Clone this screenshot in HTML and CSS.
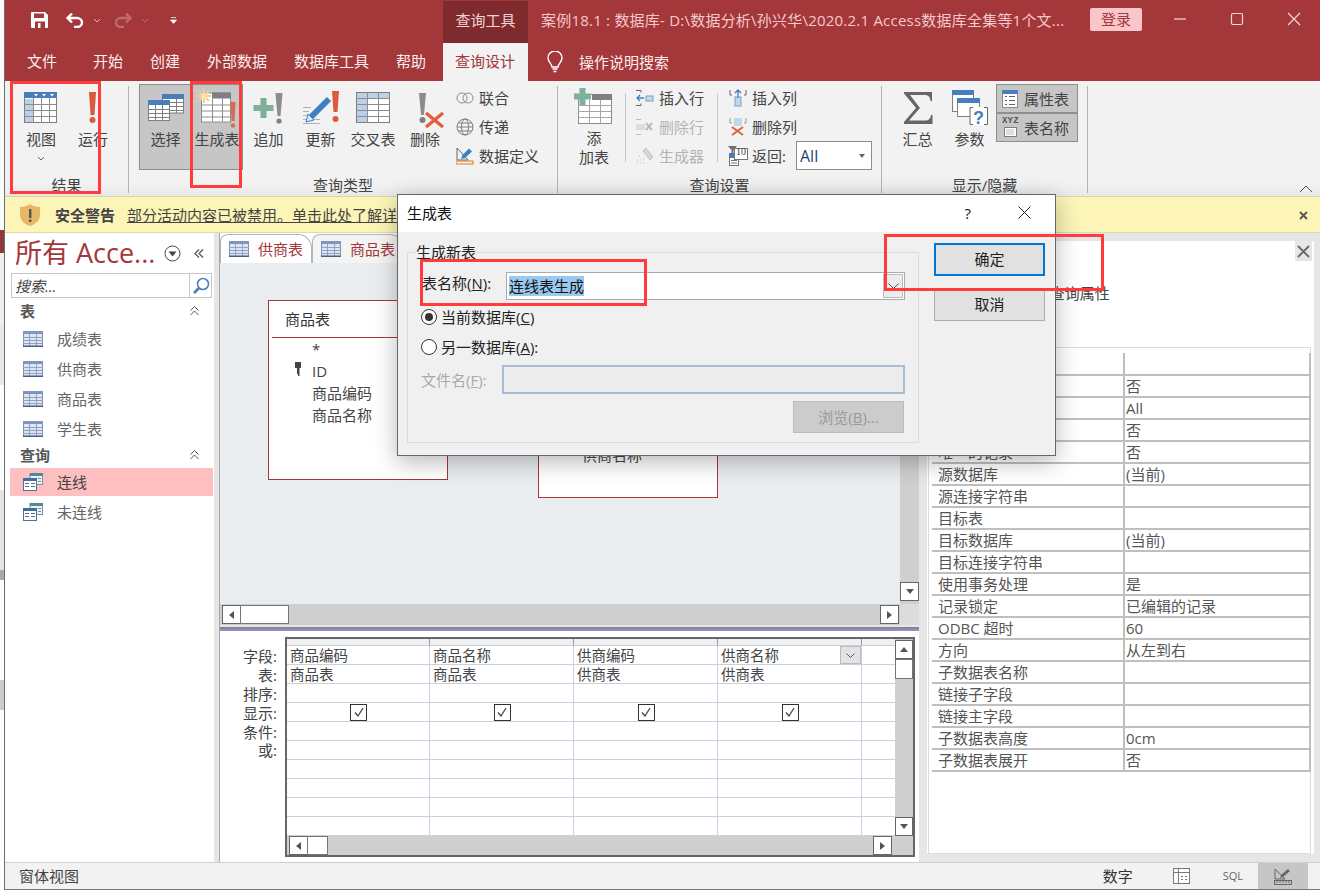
FILE: index.html
```html
<!DOCTYPE html>
<html lang="zh-CN">
<head>
<meta charset="utf-8">
<title>生成表</title>
<link rel="stylesheet" href="styles.css">
</head>
<body>
<svg class="defs" width="0" height="0">
  <symbol id="navtbl" viewBox="0 0 20 16">
    <rect x="0.5" y="0.5" width="19" height="15" fill="#dfe6f2" stroke="#7d8fb0"/>
    <rect x="0" y="0" width="20" height="3" fill="#7f95bd"/>
    <path d="M0 6.5h20M0 9.5h20M0 12.5h20M6.5 3v12M13.5 3v12" stroke="#8ea2c4" fill="none"/>
    <rect x="0" y="14.5" width="20" height="1.5" fill="#4a5f80"/>
  </symbol>
  <symbol id="navqry" viewBox="0 0 20 18">
    <rect x="7" y="0.5" width="12.5" height="11" fill="#eef3f6" stroke="#6f97a3"/>
    <rect x="7" y="0" width="13" height="3" fill="#4f8a96"/>
    <rect x="0.5" y="5.5" width="13" height="12" fill="#fff" stroke="#56708f"/>
    <rect x="0" y="5" width="14" height="3" fill="#3f6f96"/>
    <path d="M2 10.5h4M2 13.5h4M8 10.5h4M8 13.5h4" stroke="#56708f" fill="none"/>
    <path d="M15 5.5h3M15 8.5h3" stroke="#6f97a3"/>
  </symbol>
</svg>
<div class="screen">
  <div class="strip"><i class="b1"></i><i class="b2"></i><i class="b3"></i><i class="b4"></i><i class="b5"></i><i class="b6"></i><i class="b7"></i><i class="b8"></i><i class="b9"></i><i class="b10"></i></div>
  <div class="app">
    <header class="titlebar">
      <div class="qat">
        <svg class="q-save" width="18" height="16" viewBox="0 0 18 16"><path fill="#fff" d="M1 0h13l3 3v12a1 1 0 0 1-1 1H1a1 1 0 0 1-1-1V1a1 1 0 0 1 1-1zm2 1.5V6h10V1.500zM4 9.500V16h10V9.500z" fill-rule="evenodd"/><rect x="7" y="11" width="2.500" height="5" fill="#fff"/></svg>
        <svg class="q-undo" width="18" height="16" viewBox="0 0 18 16"><path d="M6 1.500 1.500 6 6 10.500M2 6h9a5 4.500 0 0 1 0 9H8" fill="none" stroke="#fff" stroke-width="2.400"/></svg>
        <svg class="q-chev" width="8" height="5" viewBox="0 0 8 5"><path d="M1 1l3 3 3-3" fill="none" stroke="#e3b8ba"/></svg>
        <svg class="q-redo" width="18" height="16" viewBox="0 0 18 16"><path d="M12 1.500 16.500 6 12 10.500M16 6H7a5 4.500 0 0 0 0 9h3" fill="none" stroke="#bd6d70" stroke-width="2.400"/></svg>
        <svg class="q-chev" width="8" height="5" viewBox="0 0 8 5"><path d="M1 1l3 3 3-3" fill="none" stroke="#bd6d70"/></svg>
        <svg class="q-cust" width="7" height="7" viewBox="0 0 7 7"><path d="M1 .5h5M0.500 3h6L3.500 6.500z" fill="#fff" stroke="#fff" stroke-width=".7"/></svg>
      </div>
      <div class="tooltab">查询工具</div>
      <div class="doc">案例18.1 : 数据库- D:\数据分析\孙兴华\2020.2.1 Access数据库全集等1个文...</div>
      <button class="login">登录</button>
      <div class="winbtns">
        <svg width="14" height="14" viewBox="0 0 14 14"><path d="M1 7h12" stroke="#f4d9da" stroke-width="1.200"/></svg>
        <svg width="14" height="14" viewBox="0 0 14 14"><rect x="1.500" y="1.500" width="11" height="11" rx="1.500" fill="none" stroke="#f4d9da" stroke-width="1.200"/></svg>
        <svg width="14" height="14" viewBox="0 0 14 14"><path d="M1 1l12 12M13 1 1 13" stroke="#f4d9da" stroke-width="1.200"/></svg>
      </div>
    </header>
    <nav class="tabbar">
      <span class="tab first">文件</span><span class="tab">开始</span><span class="tab">创建</span><span class="tab">外部数据</span><span class="tab">数据库工具</span><span class="tab">帮助</span><span class="tab active">查询设计</span>
      <svg class="bulb" width="16" height="22" viewBox="0 0 16 22"><path d="M5 16c0-3-4-5-4-9a7 7 0 0 1 14 0c0 4-4 6-4 9z" fill="none" stroke="#fff" stroke-width="1.400"/><path d="M5.500 18h5M6.500 20.500h3" stroke="#fff" stroke-width="1.400"/></svg>
      <span class="tellme">操作说明搜索</span>
    </nav>

    <section class="ribbon">
      <div class="group g1">
        <div class="gbody">
          <div class="big w52">
            <svg width="34" height="32" viewBox="0 0 34 32"><rect x=".5" y=".5" width="32" height="30" fill="#fff" stroke="#7f7f7f"/><rect x="1" y="7" width="8" height="23" fill="#bcd0e8"/><rect width="33" height="6" fill="#4a7ebb"/><path d="M0 12.500h33M0 18.500h33M0 24.500h33M9.500 6v25M17.500 6v25M25.500 6v25" stroke="#8c8c8c" fill="none"/><path d="M10 2h4l-2 2.500zM18 2h4l-2 2.500zM26 2h4l-2 2.500z" fill="#fff"/></svg>
            <span class="lbl">视图</span>
            <svg class="chev" width="8" height="5" viewBox="0 0 8 5"><path d="M1 1l3 3 3-3" fill="none" stroke="#666"/></svg>
          </div>
          <div class="big w52">
            <svg width="34" height="32" viewBox="0 0 34 32"><path d="M13 0h7l-1.500 23h-4z" fill="#dc5a3c"/><circle cx="16.500" cy="28" r="3" fill="#dc5a3c"/></svg>
            <span class="lbl">运行</span>
          </div>
        </div>
        <div class="gname">结果</div>
      </div>

      <div class="group g2">
        <div class="gbody">
          <div class="big w53 on onl">
            <svg width="36" height="32" viewBox="0 -2 36 32"><rect x="14.500" y="1" width="21" height="18" fill="#fff" stroke="#7f7f7f"/><rect x="14" y="0" width="22" height="5" fill="#4a7ebb"/><path d="M22 8.500h14M22 12.500h14M22 16.500h14M28.500 5v14" stroke="#7f7f7f"/><rect x=".5" y="7" width="21" height="19.500" fill="#fff" stroke="#7f7f7f"/><rect y="6" width="22" height="5" fill="#4a7ebb"/><path d="M0 15.500h22M0 19.500h22M0 23.500h22M7.500 11v16M14.500 11v16" stroke="#7f7f7f"/></svg>
            <span class="lbl">选择</span>
          </div>
          <div class="big w51 on onr">
            <svg width="40" height="32" viewBox="0 3.500 40 32"><rect x="4.500" y="4.500" width="29" height="29" fill="#fff" stroke="#8c8c8c"/><rect x="15" y="4" width="19" height="6" fill="#7f7f7f"/><path d="M4 16.500h30M4 22.500h30M4 28.500h30M15.500 10v23M25.500 10v23" stroke="#8c8c8c"/><path d="M7 .5v14M0 7.500h14M2 2.500l10 10M12 2.500l-10 10" stroke="#f0d092" stroke-width="2"/><circle cx="7" cy="7.500" r="3" fill="#f6e2b6"/><path d="M33.500 13.500h5l-1 19h-3z" fill="#dc6a50"/><circle cx="36" cy="37" r="2.200" fill="#dc6a50"/></svg>
            <span class="lbl">生成表</span>
          </div>
          <div class="big w51">
            <svg width="34" height="32" viewBox="0 0 34 32"><path d="M8.500 6h6v7h7v6h-7v7h-6v-7h-7v-6h7z" fill="#7fb09a"/><path d="M23.500 1h7l-2 23h-3z" fill="#8c8c8c"/><circle cx="27" cy="29" r="2.600" fill="#7f7f7f"/></svg>
            <span class="lbl">追加</span>
          </div>
          <div class="big w53">
            <svg width="36" height="32" viewBox="0 0 36 32"><path d="M0 15.500h8M0 19.500h6M0 23.500h5M0 27.500h17M0 31.500h17" stroke="#b0b0b0"/><path d="M8 25 26 7" stroke="#3f7fc4" stroke-width="6"/><path d="M3 30l2-8 6 6z" fill="#dfe7ef" stroke="#3f7fc4"/><path d="M29 -1h7l-1.500 21h-4z" fill="#dc5a3c"/><circle cx="32.500" cy="27" r="3" fill="#dc5a3c"/></svg>
            <span class="lbl">更新</span>
          </div>
          <div class="big w52">
            <svg width="34" height="32" viewBox="0 0 34 32"><rect x=".5" y=".5" width="33" height="30" fill="#fff" stroke="#7f7f7f"/><rect x="1" y="1" width="32" height="5" fill="#bcd0e8"/><rect x="1" y="6" width="11" height="24" fill="#bcd0e8"/><path d="M0 6.500h34M0 12.500h34M0 18.500h34M0 24.500h34M11.500 0v31M22.500 0v31" stroke="#8c8c8c" fill="none"/></svg>
            <span class="lbl">交叉表</span>
          </div>
          <div class="big w52">
            <svg width="34" height="32" viewBox="0 0 34 32"><path d="M11 1h7l-2 22h-3z" fill="#8c8c8c"/><circle cx="14.500" cy="28" r="3" fill="#7f7f7f"/><path d="M18 21l17 14M35 21 18 35" stroke="#e2603f" stroke-width="3.400"/></svg>
            <span class="lbl">删除</span>
          </div>
          <div class="col c-qt">
            <div class="sm">
              <svg width="18" height="12" viewBox="0 0 18 12"><circle cx="6" cy="6" r="5" fill="none" stroke="#8c8c8c"/><circle cx="12" cy="6" r="5" fill="none" stroke="#8c8c8c"/></svg><span>联合</span>
            </div>
            <div class="sm">
              <svg width="18" height="18" viewBox="0 0 18 18"><circle cx="9" cy="9" r="8" fill="none" stroke="#7f7f7f"/><ellipse cx="9" cy="9" rx="3.500" ry="8" fill="none" stroke="#7f7f7f"/><path d="M1 9h16M2 5h14M2 13h14" stroke="#7f7f7f" fill="none"/></svg><span>传递</span>
            </div>
            <div class="sm">
              <svg width="18" height="18" viewBox="0 0 18 18"><path d="M1 1v12h11z" fill="none" stroke="#666"/><path d="M5 12l1.500-4L13 1.500l3 3L9 11z" fill="#3f7fc4"/><rect x="0" y="14" width="17" height="3" fill="none" stroke="#e07b1f"/></svg><span>数据定义</span>
            </div>
          </div>
        </div>
        <div class="gname">查询类型</div>
      </div>

      <div class="group g3">
        <div class="gbody">
          <div class="big w48">
            <svg width="40" height="32" viewBox="0 0 40 32"><rect x="4.500" y="2.500" width="33" height="29" fill="#fff" stroke="#8c8c8c"/><rect x="18" y="2" width="20" height="6" fill="#7f7f7f"/><path d="M4 13.500h33M4 19.500h33M4 25.500h33M15.500 8v23M26.500 8v23" stroke="#a6a6a6"/><path d="M5.500-4h6v5.500H17v6h-5.500V13h-6V7.500H0v-6h5.500z" fill="#7fb09a"/></svg>
            <span class="lbl tall">添<br>加表</span>
          </div>
          <div class="col c-row">
            <div class="sm">
              <svg width="18" height="18" viewBox="0 0 18 18"><path d="M1 9h7M4 6 1 9l3 3" fill="none" stroke="#3f7fc4" stroke-width="1.300"/><path d="M0 1.500h5v2M0 16.500h5v-2" fill="none" stroke="#666"/><rect x="10" y="7" width="7" height="5" fill="#c4d6ea" stroke="#7da0c8"/></svg><span>插入行</span>
            </div>
            <div class="sm off">
              <svg width="18" height="18" viewBox="0 0 18 18"><path d="M0 1.500h5M0 16.500h5" stroke="#bbb"/><rect y="6" width="9" height="6" fill="#ddd"/><path d="M10 5l6 7M16 5l-6 7" stroke="#bbb" stroke-width="2"/></svg><span>删除行</span>
            </div>
            <div class="sm off">
              <svg width="18" height="18" viewBox="0 0 18 18"><path d="M7 4l3-3 7 9-3 3z" fill="#d8d8d8" stroke="#c0c0c0"/><path d="M3 9h1M1 13h1M4 13h1M1 16h1M4 16h1M7 16h1M7 12h1" stroke="#bbb"/></svg><span>生成器</span>
            </div>
          </div>
          <div class="col c-col">
            <div class="sm">
              <svg width="18" height="18" viewBox="0 0 18 18"><path d="M1 1v5h2M17 1v5h-2" fill="none" stroke="#666"/><rect x="6" y="8" width="6" height="9" fill="#c4d6ea" stroke="#7da0c8"/><path d="M9 9V1M6 4l3-3 3 3" fill="none" stroke="#3f7fc4" stroke-width="1.300"/></svg><span>插入列</span>
            </div>
            <div class="sm">
              <svg width="18" height="18" viewBox="0 0 18 18"><path d="M1 0v5h2M17 0v5h-2" fill="none" stroke="#999"/><rect x="5" y="0" width="8" height="8" fill="#c4d6ea"/><path d="M3 9l11 8M14 9 3 17" stroke="#e2603f" stroke-width="2"/></svg><span>删除列</span>
            </div>
            <div class="sm return">
              <svg width="20" height="20" viewBox="0 0 20 20"><path d="M0 0h9L5.500 4v3h-2V4z" fill="#707070"/><rect x="1" y="7" width="9" height="4" fill="#3f7fc4"/><rect x="1.500" y="11.500" width="9" height="8" fill="#fff" stroke="#777"/><path d="M3 14.500h6M3 17h6" stroke="#777"/><rect x="6.500" y="2.500" width="13" height="11" fill="#fff" stroke="#777"/></svg><span class="r10">10</span><span>返回:</span>
              <div class="select"><span>All</span><i></i></div>
            </div>
          </div>
        </div>
        <div class="gname">查询设置</div>
      </div>

      <div class="group g4">
        <div class="gbody">
          <div class="big w51">
            <svg width="30" height="32" viewBox="0 0 30 32"><path d="M1 0h28v9h-1.500c-.3-4-2-6-6-6H7l10 13L6 28.500h16c4 0 5.500-2 6-5.500H29.500v9H1v-2l12-14L1 1.500z" fill="#666"/></svg>
            <span class="lbl">汇总</span>
          </div>
          <div class="big w53">
            <svg width="36" height="32" viewBox="0 0 36 32"><rect x=".5" y="-1.500" width="21" height="21" fill="#fff" stroke="#7f7f7f"/><rect y="-2" width="22" height="5" fill="#4a7ebb"/><rect x="5.500" y="6.500" width="22" height="18" fill="#fff" stroke="#7f7f7f"/><rect x="5" y="6" width="23" height="5" fill="#4a7ebb"/><rect x="18" y="15" width="17.500" height="18" fill="#fff"/><path d="M21 15.500h-3v17h3M32 15.500h3.500v17H32" fill="none" stroke="#666"/></svg>
            <span class="qm">?</span>
            <span class="lbl">参数</span>
          </div>
          <div class="props-btns">
            <div class="pb">
              <svg width="16" height="18" viewBox="0 0 16 18"><rect x=".5" y=".5" width="15" height="17" fill="#fff" stroke="#8c8c8c"/><rect width="16" height="4" fill="#4a7ebb"/><path d="M3 6.500h2M3 10.500h2M3 14.500h2M7 6.500h6M7 10.500h6M7 14.500h6" stroke="#666"/></svg><span>属性表</span>
            </div>
            <div class="pb">
              <svg width="16" height="18" viewBox="0 0 16 18"><rect x="2.500" y="8.500" width="12" height="9" fill="#fff" stroke="#7f7f7f"/><path d="M4.500 11h8M4.500 13h8M4.500 15h8" stroke="#777" stroke-dasharray="1 1"/></svg><span class="xyz">XYZ</span><span>表名称</span>
            </div>
          </div>
        </div>
        <div class="gname">显示/隐藏</div>
      </div>
      <svg class="collapse" width="14" height="8" viewBox="0 0 14 8"><path d="M1 7l6-6 6 6" fill="none" stroke="#555"/></svg>
    </section>

    <section class="warning">
      <svg width="20" height="22" viewBox="0 0 20 22"><path d="M10 0c3 2 6 3 10 3v8c0 5-4 9-10 11C4 20 0 16 0 11V3c4 0 7-1 10-3z" fill="#e8b765"/><rect x="9" y="5" width="2.400" height="9" fill="#555"/><rect x="9" y="15.500" width="2.400" height="2.400" fill="#555"/></svg>
      <strong>安全警告</strong>
      <a class="warnlink">部分活动内容已被禁用。单击此处了解详细信息。</a>
      <svg class="warnx" width="9" height="9" viewBox="0 0 9 9"><path d="M1 1l7 7M8 1 1 8" stroke="#555" stroke-width="1.800"/></svg>
    </section>

    <main class="main">
      <aside class="nav">
        <div class="navhead">
          <span class="navtitle">所有 Acce...</span>
          <svg class="navdd" width="17" height="17" viewBox="0 0 17 17"><circle cx="8.500" cy="8.500" r="7.500" fill="none" stroke="#444"/><path d="M4.500 6.500h8l-4 5z" fill="#444"/></svg>
          <svg class="navcol" width="10" height="9" viewBox="0 0 10 9"><path d="M5 .5 1 4.500l4 4M9 .5l-4 4 4 4" fill="none" stroke="#555" stroke-width="1.300"/></svg>
        </div>
        <div class="search">
          <span>搜索...</span>
          <i class="searchbtn"><svg width="18" height="18" viewBox="0 0 18 18"><circle cx="11" cy="7" r="5.500" fill="none" stroke="#4a7ebb" stroke-width="1.600"/><path d="M7 11l-5 5" stroke="#4a7ebb" stroke-width="2.600"/></svg></i>
        </div>
        <div class="navsec"><span>表</span><svg width="9" height="10" viewBox="0 0 9 10"><path d="M.5 4.500l4-4 4 4M.5 9l4-4 4 4" fill="none" stroke="#555"/></svg></div>
        <div class="navitem"><svg width="20" height="16"><use href="#navtbl"/></svg><span>成绩表</span></div>
        <div class="navitem"><svg width="20" height="16"><use href="#navtbl"/></svg><span>供商表</span></div>
        <div class="navitem"><svg width="20" height="16"><use href="#navtbl"/></svg><span>商品表</span></div>
        <div class="navitem"><svg width="20" height="16"><use href="#navtbl"/></svg><span>学生表</span></div>
        <div class="navsec q"><span>查询</span><svg width="9" height="10" viewBox="0 0 9 10"><path d="M.5 4.500l4-4 4 4M.5 9l4-4 4 4" fill="none" stroke="#555"/></svg></div>
        <div class="navitem sel"><svg width="20" height="18"><use href="#navqry"/></svg><span>连线</span></div>
        <div class="navitem"><svg width="20" height="18"><use href="#navqry"/></svg><span>未连线</span></div>
      </aside>

      <div class="center">
        <div class="doctabs">
          <div class="doctab"><svg width="20" height="16"><use href="#navtbl"/></svg><span>供商表</span></div>
          <div class="doctab"><svg width="20" height="16"><use href="#navtbl"/></svg><span>商品表</span></div>
        </div>
        <div class="pane">
          <div class="canvas">
            <div class="qtable t1">
              <div class="qt-title">商品表</div>
              <div class="qt-fields"><div>*</div><div class="key"><svg width="6" height="14" viewBox="0 0 6 14"><path d="M0 0h6v6H4.500v8H3v-2H2V6H0z" fill="#444"/></svg>ID</div><div>商品编码</div><div>商品名称</div></div>
            </div>
            <div class="qtable t2">
              <div class="qt-title">供商表</div>
              <div class="qt-fields"><div>*</div><div class="key"><svg width="6" height="14" viewBox="0 0 6 14"><path d="M0 0h6v6H4.500v8H3v-2H2V6H0z" fill="#444"/></svg>ID</div><div>供商编码</div><div>供商地址</div><div>供商名称</div></div>
            </div>
          </div>
          <div class="vscroll">
            <div class="sbtn dn low"></div>
          </div>
          <div class="hscroll">
            <div class="sbtn lf"></div><div class="thumb h48"></div><div class="sbtn rt end"></div>
          </div>
          <div class="corner"></div>
        </div>
        <div class="splitter"></div>
        <div class="gridpane">
          <div class="rowlabels"><div>字段:</div><div>表:</div><div>排序:</div><div>显示:</div><div>条件:</div><div>或:</div></div>
          <div class="qbe">
            <div class="qbe-grid">
              <div class="hd"></div><div class="hd"></div><div class="hd"></div><div class="hd"></div><div class="hd"></div>
              <div>商品编码</div><div>商品名称</div><div>供商编码</div><div class="dd">供商名称<b><svg width="9" height="5" viewBox="0 0 9 5"><path d="M.5.500l4 4 4-4" fill="none" stroke="#555"/></svg></b></div><div></div>
              <div>商品表</div><div>商品表</div><div>供商表</div><div>供商表</div><div></div>
              <div></div><div></div><div></div><div></div><div></div>
              <div class="ck"><em><svg width="12" height="12" viewBox="0 0 12 12"><path d="M2 6.500 5 10l5-8" fill="none" stroke="#444" stroke-width="1.300"/></svg></em></div><div class="ck"><em><svg width="12" height="12" viewBox="0 0 12 12"><path d="M2 6.500 5 10l5-8" fill="none" stroke="#444" stroke-width="1.300"/></svg></em></div><div class="ck"><em><svg width="12" height="12" viewBox="0 0 12 12"><path d="M2 6.500 5 10l5-8" fill="none" stroke="#444" stroke-width="1.300"/></svg></em></div><div class="ck"><em><svg width="12" height="12" viewBox="0 0 12 12"><path d="M2 6.500 5 10l5-8" fill="none" stroke="#444" stroke-width="1.300"/></svg></em></div><div></div>
              <div></div><div></div><div></div><div></div><div></div>
              <div></div><div></div><div></div><div></div><div></div>
              <div></div><div></div><div></div><div></div><div></div>
              <div></div><div></div><div></div><div></div><div></div>
              <div></div><div></div><div></div><div></div><div></div>
              <div></div><div></div><div></div><div></div><div></div>
            </div>
            <div class="q-v">
              <div class="sbtn up tallb"></div><div class="thumb v20"></div><div class="sbtn dn tallb bottom"></div>
            </div>
            <div class="q-h">
              <div class="sbtn lf"></div><div class="thumb w21"></div><div class="sbtn rt end"></div>
            </div>
            <div class="q-corner"></div>
          </div>
        </div>
      </div>

      <aside class="props">
        <div class="props-head"><span>属性表</span><i class="props-x"><svg width="13" height="13" viewBox="0 0 13 13"><path d="M1 1l11 11M12 1 1 12" stroke="#666" stroke-width="1.800"/></svg></i></div>
        <div class="props-kind">所选内容的类型: 查询属性</div>
        <div class="props-box">
          <table class="ptable">
            <tr><td>说明</td><td></td></tr>
            <tr><td>输出所有字段</td><td>否</td></tr>
            <tr><td>上限值</td><td>All</td></tr>
            <tr><td>唯一值</td><td>否</td></tr>
            <tr><td>唯一的记录</td><td>否</td></tr>
            <tr><td>源数据库</td><td>(当前)</td></tr>
            <tr><td>源连接字符串</td><td></td></tr>
            <tr><td>目标表</td><td></td></tr>
            <tr><td>目标数据库</td><td>(当前)</td></tr>
            <tr><td>目标连接字符串</td><td></td></tr>
            <tr><td>使用事务处理</td><td>是</td></tr>
            <tr><td>记录锁定</td><td>已编辑的记录</td></tr>
            <tr><td>ODBC 超时</td><td>60</td></tr>
            <tr><td>方向</td><td>从左到右</td></tr>
            <tr><td>子数据表名称</td><td></td></tr>
            <tr><td>链接子字段</td><td></td></tr>
            <tr><td>链接主字段</td><td></td></tr>
            <tr><td>子数据表高度</td><td>0cm</td></tr>
            <tr><td>子数据表展开</td><td>否</td></tr>
          </table>
        </div>
      </aside>
    </main>

    <footer class="status">
      <span class="st-left">窗体视图</span>
      <span class="st-num">数字</span>
      <span class="st-ico s1"><svg width="17" height="16" viewBox="0 0 17 16"><rect x=".5" y=".5" width="16" height="15" fill="#fff" stroke="#777"/><path d="M0 4.500h17M5.500 0v16M8 8.500h2M12 8.500h2M8 11.500h2M12 11.500h2" stroke="#777"/></svg></span>
      <span class="st-ico sql">SQL</span>
      <span class="st-ico s3"><svg width="18" height="17" viewBox="0 0 18 17"><path d="M1 1v10h10z" fill="none" stroke="#666"/><path d="M6 10l1-3 7-6 2 2-7 6z" fill="#666"/><rect x=".5" y="12.500" width="17" height="4" fill="none" stroke="#666"/><path d="M3 13v2M6 13v2M9 13v2M12 13v2M15 13v2" stroke="#666"/></svg></span>
    </footer>
  </div>

  <div class="dialog">
    <div class="dlg-title"><span>生成表</span><span class="dlg-q">?</span><svg width="13" height="13" viewBox="0 0 13 13"><path d="M.5.500l12 12M12.500.500l-12 12" stroke="#222"/></svg></div>
    <div class="dlg-body">
      <fieldset class="fs">
        <legend>生成新表</legend>
        <div class="row r-name">
          <label class="flabel"><span>表名称(<u>N</u>):</span></label>
          <div class="combo"><span class="seltext">连线表生成</span><b><svg width="11" height="6" viewBox="0 0 11 6"><path d="M.5.500l5 5 5-5" fill="none" stroke="#555"/></svg></b></div>
        </div>
        <div class="row r-radio"><i class="radio on"></i><span>当前数据库(<u>C</u>)</span></div>
        <div class="row r-radio"><i class="radio"></i><span>另一数据库(<u>A</u>):</span></div>
        <div class="row r-file"><span class="flabel2">文件名(<u>F</u>):</span><div class="fileinput"></div></div>
        <div class="row r-browse"><div class="browse">浏览(<u>B</u>)...</div></div>
      </fieldset>
      <div class="dlg-btns">
        <div class="dbtn ok">确定</div>
        <div class="dbtn">取消</div>
      </div>
    </div>
  </div>

  <div class="mark m1"></div>
  <div class="mark m2"></div>
  <div class="mark m3"></div>
  <div class="mark m4"></div>
</div>
</body>
</html>
```

FILE: styles.css
```css
* { box-sizing: border-box; }
html, body { margin: 0; padding: 0; }
body {
  width: 1320px; height: 892px; overflow: hidden; background: #fff;
  font: 15px/20px "Open Sans", "Noto Sans CJK SC", sans-serif; color: #444;
}
svg { display: block; flex: none; }
.defs { position: absolute; }
.screen { position: relative; width: 1320px; height: 892px; display: flex; }
.strip { width: 5px; height: 890px; background: #fff; border-right: 1px solid #6d6d6d; display: flex; flex-direction: column; }
.strip i { display: block; width: 4px; }
.strip .b1 { height: 230px; background: #fbfbfb; }
.strip .b2 { height: 23px; background: #8f3a3a; }
.strip .b3 { height: 72px; background: #efefef; }
.strip .b4 { height: 60px; background: #e8e8ee; }
.strip .b5 { height: 105px; background: #fff; }
.strip .b6 { height: 80px; background: #e4e4e8; }
.strip .b7 { height: 10px; background: #aaa; }
.strip .b8 { height: 100px; background: #fff; }
.strip .b9 { height: 30px; background: #ccc; }
.strip .b10 { height: 180px; background: #fff; }
.app { width: 1315px; height: 890px; display: flex; flex-direction: column; background: #e6e6e6; border-bottom: 1px solid #777; }

/* title bar */
.titlebar { height: 43px; background: #a4373a; display: flex; align-items: flex-start; color: #fff; flex: none; }
.qat { width: 438px; height: 43px; display: flex; align-items: center; padding: 0 0 3px 26px; }
.q-undo { margin-left: 17px; }
.q-chev { margin-left: 9px; }
.q-redo { margin-left: 13px; }
.q-chev + .q-redo { margin-left: 13px; }
.q-cust { margin-left: 21px; }
.tooltab { width: 85px; height: 42px; margin-top: 1px; background: #7f2a2d; color: #efd5d6; text-align: center; line-height: 39px; }
.doc { margin-left: 13px; line-height: 40px; width: 549px; color: #f4c9cb; white-space: nowrap; overflow: hidden; font-size: 15px; letter-spacing: .22px; }
.login { width: 52px; height: 23px; margin: 8px 0 0 0; border: 0; border-radius: 2px; background: #f9c6ca; color: #a4373a; font: 15px/23px "Open Sans", "Noto Sans CJK SC", sans-serif; padding: 0; }
.winbtns { display: flex; gap: 43px; margin: 12px 0 0 31px; }
.winbtns svg { width: 14px; height: 14px; }

.tabbar { height: 38px; background: #a4373a; display: flex; align-items: center; color: #fff; flex: none; }
.tab { padding: 0 13.5px; height: 38px; line-height: 36px; color: #fbeeee; white-space: nowrap; }
.tab.first { padding: 0 22.5px 0 22px; }
.tab.active { margin-left: 3.5px; padding: 0 0 0 12px; width: 85px; text-align: left; background: #f2f2f2; color: #a4373a; line-height: 36px; }
.bulb { margin-left: 19px; }
.tellme { margin-left: 16px; color: #fbeeee; }

/* ribbon */
.ribbon { height: 116px; background: linear-gradient(#f2f2f2 88%, #e9e9e9); display: flex; flex: none; position: relative; border-bottom: 1px solid #d5d5a5; }
.group { display: flex; flex-direction: column; border-right: 1px solid #b4b4b4; margin: 5px 0 3px; height: 107px; }
.gbody { display: flex; height: 91px; margin-top: -2px; flex: none; }
.gname { text-align: center; line-height: 20px; color: #444; }
.g1 { width: 124px; padding-left: 10px; }
.g1 .gname, .g2 .gname, .g4 .gname { margin-left: -10px; }
.g2 { width: 429px; padding-left: 10px; }
.g3 { width: 324px; padding-left: 12px; }
.g3 .gname { margin-left: -12px; }
.g4 { width: 206px; padding-left: 10px; }
.big { height: 86px; padding-top: 8px; display: flex; flex-direction: column; align-items: center; position: relative; }
.big > svg:first-child { overflow: visible; }
.big .lbl { margin-top: 5px; line-height: 20px; white-space: nowrap; }
.big .lbl.tall { line-height: 19px; text-align: center; margin-top: 5px; }
.big .chev { margin-top: 7px; }
.w48 { width: 48px; }
.w51 { width: 51px; }
.w52 { width: 52px; }
.w53 { width: 53px; }
.big.on { background: #c6c6c6; border-top: 1px solid #8e8e8e; border-bottom: 1px solid #8e8e8e; padding-top: 7px; }
.big.onl { border-left: 1px solid #8e8e8e; padding-right: 1px; }
.big.onr { border-right: 1px solid #8e8e8e; }
.qm { position: absolute; left: 30px; top: 25px; color: #3f7fc4; font: 700 18px/18px "Liberation Sans", sans-serif; }
.col { display: flex; flex-direction: column; margin-top: -1px; }
.c-qt { padding-left: 5px; }
.c-row { margin-left: 7px; padding: 0 14px 0 11px; position: relative; }
.c-row::before, .c-row::after { content: ""; position: absolute; top: 10px; width: 1px; height: 69px; background: #c8c8c8; }
.c-row::before { left: 0; }
.c-row::after { right: 0; }
.c-col { padding-left: 11px; }
.sm { height: 29px; display: flex; align-items: center; gap: 5px; white-space: nowrap; position: relative; }
.sm > svg { width: 18px; }
.sm.off { color: #b4b4b4; }
.sm.return { gap: 4px; margin-left: -1px; }
.sm.return > svg { width: 20px; }
.r10 { position: absolute; left: 8px; top: 5px; font: 10px/12px "Liberation Serif", serif; color: #444; }
.select { width: 76px; height: 29px; margin-left: 6px; border: 1px solid #8c8c8c; background: #fff; color: #1f3f73; font-size: 16px; display: flex; align-items: center; justify-content: space-between; padding: 0 6px 0 3px; }
.select i { width: 0; height: 0; border: 3.5px solid transparent; border-top: 4px solid #666; border-bottom: 0; }
.props-btns { display: flex; flex-direction: column; width: 82px; height: 58px; }
.pb { height: 29px; background: #c6c6c6; border: 1px solid #8e8e8e; display: flex; align-items: center; padding-left: 5px; gap: 6px; position: relative; white-space: nowrap; }
.xyz { position: absolute; left: 5px; top: 3px; font: 700 9px/9px "Liberation Mono", monospace; color: #555; letter-spacing: .2px; }
.collapse { position: absolute; right: 7px; bottom: 3px; }

/* warning */
.warning { height: 36px; flex: none; background: #fcf5b7; border-bottom: 1px solid #dedcae; display: flex; align-items: center; padding-left: 15px; position: relative; }
.warning strong { margin-left: 15px; font-weight: 700; color: #444; }
.warnlink { margin-left: 12px; text-decoration: underline; color: #444; }
.warnx { position: absolute; right: 12px; top: 14px; }

/* main */
.main { flex: 1; display: flex; min-height: 0; background: #e6e6e6; border-bottom: 1px solid #cfcfcf; }
.nav { width: 209px; background: #fff; flex: none; display: flex; flex-direction: column; padding-left: 5px; }
.navhead { height: 40px; display: flex; align-items: center; position: relative; margin-left: 1px; }
.navtitle { font-size: 27px; line-height: 40px; color: #a4373a; margin-left: 4px; white-space: nowrap; width: 149px; }
.navcol { margin-left: 13px; }
.search { width: 201px; height: 25px; margin-left: 1px; border: 1px solid #c6c6c6; display: flex; align-items: center; justify-content: space-between; font-style: italic; padding-left: 3px; }
.searchbtn { width: 22px; height: 23px; border-left: 1px solid #c6c6c6; display: flex; align-items: center; justify-content: center; }
.navsec { height: 26px; width: 203px; display: flex; align-items: center; justify-content: space-between; font-weight: 700; padding: 0 14px 0 10px; color: #555; }
.navsec.q { height: 22px; margin-bottom: 2px; }
.navitem { height: 30px; width: 203px; display: flex; align-items: center; color: #666; padding-left: 13px; gap: 14px; }
.navitem.sel { height: 28px; background: #fdbfc0; color: #444; margin-bottom: 1px; }

.center { width: 700px; flex: none; display: flex; flex-direction: column; background: #e6e6e6; border-left: 1px solid #a6a6a6; margin-left: 5px; }
.doctabs { height: 30px; flex: none; display: flex; align-items: flex-end; background: #fff; border-bottom: 1px solid #8c8c8c; }
.doctab { height: 29px; width: 92px; background: #fff; border: 1px solid #b4b4b4; border-bottom: 0; border-radius: 8px 14px 0 0; color: #a4373a; display: flex; align-items: center; gap: 9px; padding-left: 8px; margin-bottom: -1px; }
.doctab + .doctab { background: #f4f4f4; }
.pane { display: grid; grid-template-columns: 680px 19px; grid-template-rows: 341px 21px; flex: none; }
.canvas { background: #eaedf0; position: relative; overflow: hidden; }
.qtable { position: absolute; width: 180px; height: 180px; background: #fff; border: 1px solid #a4373a; }
.t1 { left: 48px; top: 37px; }
.t2 { left: 318px; top: 55px; }
.qt-title { height: 37px; margin-left: 3px; padding-left: 13px; line-height: 37px; border-bottom: 1px solid #a4373a; color: #333; }
.qt-fields { padding: 0 0 0 43px; }
.qt-fields div { height: 22px; line-height: 22px; position: relative; color: #444; }
.key svg { position: absolute; left: -17px; top: 2px; }
.vscroll { background: #cfcfcf; display: flex; flex-direction: column; justify-content: flex-end; padding-bottom: 3px; }
.hscroll { background: #cfcfcf; display: flex; align-items: center; padding: 0 1px 0 2px; }
.corner { background: #dcdcdc; }
.sbtn { width: 19px; height: 19px; background: #fff; border: 1px solid #666; display: flex; align-items: center; justify-content: center; flex: none; }
.sbtn::before { content: ""; width: 0; height: 0; border: 4px solid transparent; }
.sbtn.dn::before { border-top: 5px solid #555; border-bottom: 0; }
.sbtn.up::before { border-bottom: 5px solid #555; border-top: 0; }
.sbtn.lf::before { border-right: 5px solid #555; border-left: 0; }
.sbtn.rt::before { border-left: 5px solid #555; border-right: 0; }
.sbtn.end { margin-left: auto; }
.thumb { background: #fff; border: 1px solid #777; flex: none; }
.h48 { width: 49px; height: 19px; margin-left: -1px; }
.splitter { height: 4px; margin-top: 2px; flex: none; background: linear-gradient(#7d7d9e, #9a9ab4); }
.gridpane { flex: 1; background: #fff; display: flex; min-height: 0; }
.rowlabels { width: 65px; padding: 16px 8px 0 0; text-align: right; }
.rowlabels div { height: 18.900px; line-height: 18px; white-space: nowrap; }
.qbe { width: 630px; height: 220px; margin-top: 6px; border: 2px solid #666; display: grid; grid-template-columns: 608px 18px; grid-template-rows: 197px 19px; background: #cfcfcf; }
.qbe-grid { display: grid; grid-template-columns: 143px 144px 144px 144px 33px; grid-template-rows: 7px repeat(10, 19px); background: #fff; font-size: 14.500px; overflow: hidden; }
.qbe-grid > div { border-right: 1px solid #c7d0e0; border-bottom: 1px solid #c7d0e0; padding-left: 3px; line-height: 20px; white-space: nowrap; position: relative; overflow: hidden; }
.qbe-grid > div:nth-child(5n) { border-right: 0; }
.qbe-grid > .hd { background: #f0f0f0; border-right-color: #999; }
.dd b { position: absolute; right: 0; top: 0; width: 21px; height: 18px; background: #e3e3e3; border: 1px solid #bbb; display: flex; align-items: center; justify-content: center; }
.ck { display: flex; align-items: center; justify-content: center; padding: 0 !important; }
.ck em { display: flex; align-items: center; justify-content: center; width: 17px; height: 17px; background: #fff; border: 1px solid #333; margin-right: -1px; }
.q-v { grid-column: 2; grid-row: 1; display: flex; flex-direction: column; padding-top: 1px; align-items: center; }
.sbtn.tallb { height: 19px; width: 18px; }
.v20 { width: 18px; height: 20px; }
.sbtn.bottom { margin-top: auto; }
.q-h { grid-column: 1; grid-row: 2; display: flex; align-items: center; padding: 0 3px 0 2px; }
.w21 { width: 21px; height: 19px; margin-left: -1px; }
.q-corner { background: #cfcfcf; }

/* property sheet */
.props { width: 387px; margin: 8px 0 8px 8px; background: #fff; flex: none; position: relative; display: flex; flex-direction: column; }
.props-head { height: 20px; padding-left: 10px; }
.props-x { position: absolute; right: 2px; top: 0; width: 17px; height: 20px; background: #e6e6e6; display: flex; align-items: center; justify-content: center; }
.props-kind { margin-top: 22px; padding-left: 10px; height: 64px; }
.props-box { flex: 1; margin: 0 3px 0 1px; border: 1px solid #dcdcdc; padding: 5px 0 0 3px; }
.ptable { border-collapse: collapse; table-layout: fixed; width: 379px; }
.ptable td { height: 22px; padding: 0 0 0 6px; border-bottom: 2px solid #bfbfbf; border-right: 2px solid #bfbfbf; line-height: 20px; white-space: nowrap; overflow: hidden; color: #555; }
.ptable td:first-child { width: 192px; }
.ptable td + td { padding-left: 1px; }

/* status */
.status { height: 26px; flex: none; background: #f2f2f2; display: flex; align-items: center; color: #444; }
.st-left { margin-left: 14px; }
.st-num { margin-left: auto; color: #333; }
.st-ico { height: 26px; display: flex; align-items: center; justify-content: center; }
.s1 { margin-left: 40px; width: 18px; }
.sql { margin-left: 32px; font: 11px/26px "Open Sans", sans-serif; color: #666; }
.s3 { margin-left: 15px; margin-right: 12px; width: 50px; background: #c6c6c6; }

/* dialog */
.dialog { position: absolute; left: 397px; top: 194px; width: 659px; height: 262px; background: #f0f0f0; border: 1px solid #666; box-shadow: 0 6px 22px rgba(0,0,0,.28); display: flex; flex-direction: column; color: #222; }
.dlg-title { height: 37px; background: #fff; display: flex; align-items: center; padding: 0 0 2px 9px; flex: none; color: #111; }
.dlg-title span:first-child { flex: 1; }
.dlg-q { margin-right: 47px; }
.dlg-title svg { margin-right: 24px; }
.dlg-body { display: flex; padding: 10px 0 0 9px; flex: 1; }
.fs { width: 512px; height: 201px; margin: 0; padding: 0 13px 0 14px; border: 1px solid #dcdcdc; min-width: 0; }
.fs legend { margin-left: -6px; padding: 0; line-height: 20px; color: #222; }
.row { display: flex; align-items: center; }
.r-name { height: 28px; margin-top: 10px; position: relative; }
.flabel { width: 84px; flex: none; position: relative; top: -3px; white-space: nowrap; }
.combo { width: 399px; height: 28px; background: #fff; border: 1px solid #aaa; display: flex; align-items: center; padding-left: 2px; position: relative; color: #111; }
.seltext { background: #9ac8f0; line-height: 20px; }
.combo b { position: absolute; right: 1px; top: 1px; width: 20px; height: 24px; background: #ececec; border: 1px solid #bbb; display: flex; align-items: center; justify-content: center; }
.r-radio { height: 30px; color: #222; }
.r-name + .r-radio { margin-top: 2px; }
.radio { width: 16px; height: 16px; border-radius: 50%; border: 1px solid #333; background: #fff; margin: 0 4px 0 -1px; flex: none; position: relative; }
.radio.on::after { content: ""; position: absolute; left: 3px; top: 3px; width: 8px; height: 8px; border-radius: 50%; background: #333; }
.r-file { height: 29px; margin-top: 3px; }
.flabel2 { width: 81px; margin-left: -1px; color: #aaa; white-space: nowrap; flex: none; }
.fileinput { width: 403px; height: 29px; background: #ececec; border: 2px solid #a9bcd3; }
.r-browse { height: 32px; margin-top: 7px; justify-content: flex-end; padding-right: 1px; }
.browse { width: 111px; height: 32px; background: #ccc; border: 1px solid #bbb; color: #999; text-align: center; line-height: 30px; }
.dlg-btns { margin: 1px 0 0 15px; display: flex; flex-direction: column; gap: 12px; }
.dbtn { width: 111px; height: 33px; background: #e1e1e1; border: 1px solid #adadad; text-align: center; line-height: 31px; color: #222; }
.dbtn.ok { border: 2px solid #0078d7; line-height: 29px; }

/* red annotation frames */
.mark { position: absolute; border: 3px solid #ff3b3b; pointer-events: none; }
.m1 { left: 10px; top: 81px; width: 91px; height: 113px; }
.m2 { left: 190px; top: 81px; width: 52px; height: 107px; }
.m3 { left: 420px; top: 259px; width: 227px; height: 47px; }
.m4 { left: 884px; top: 234px; width: 220px; height: 57px; }
```
